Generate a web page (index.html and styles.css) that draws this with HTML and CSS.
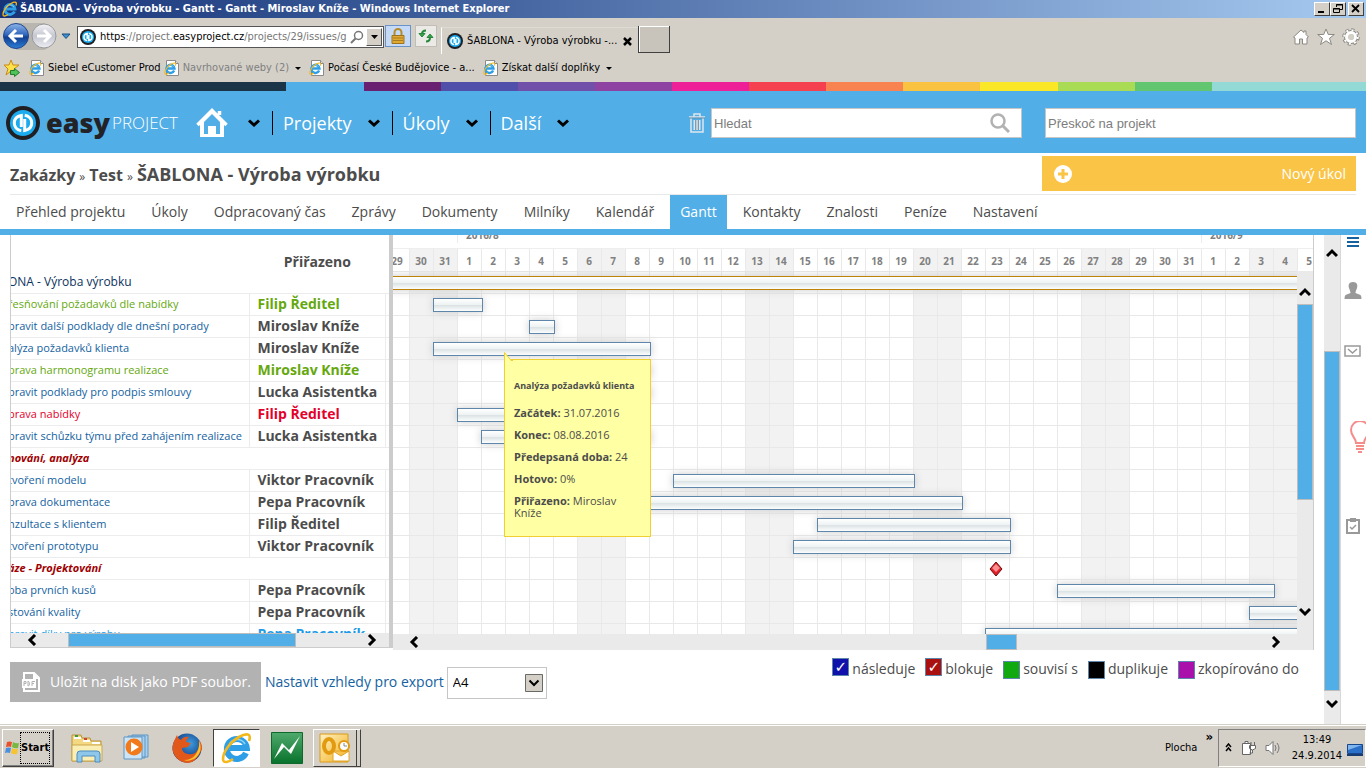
FILE: index.html
```html
<!DOCTYPE html>
<html lang="cs">
<head>
<meta charset="utf-8">
<title>ŠABLONA - Výroba výrobku - Gantt</title>
<link rel="stylesheet" href="styles.css">
</head>
<body>
<svg class="defs" aria-hidden="true">
  <defs>
    <linearGradient id="g-blue" x1="0" y1="0" x2="0" y2="1"><stop offset="0" stop-color="#8fb4e8"/><stop offset=".45" stop-color="#2f66bd"/><stop offset=".55" stop-color="#123f92"/><stop offset="1" stop-color="#2c7fd8"/></linearGradient>
    <linearGradient id="g-grey" x1="0" y1="0" x2="0" y2="1"><stop offset="0" stop-color="#f4f4f8"/><stop offset=".5" stop-color="#c4c6d0"/><stop offset="1" stop-color="#eeeef4"/></linearGradient>
    <linearGradient id="g-green" x1="0" y1="0" x2="0" y2="1"><stop offset="0" stop-color="#4faa6c"/><stop offset="1" stop-color="#08722c"/></linearGradient>
    <linearGradient id="g-gold" x1="0" y1="0" x2="1" y2="1"><stop offset="0" stop-color="#fff2c4"/><stop offset="1" stop-color="#f2b01e"/></linearGradient>
    <radialGradient id="g-fox" cx=".6" cy=".35" r=".6"><stop offset="0" stop-color="#3d9fe0"/><stop offset="1" stop-color="#12317c"/></radialGradient>
    <symbol id="ie" viewBox="0 0 32 32">
      <path fill="none" stroke="#2e9fe6" stroke-width="6" d="M25 21a10 10 0 1 1 .8-5H9"/>
      <path fill="none" stroke="#8ad4f8" stroke-width="1.5" d="M8 13a9 9 0 0 1 16-1"/>
      <path fill="none" stroke="#f5b81c" stroke-width="2.6" d="M28 9c3-8-3-8-10-4C9 10 2 20 2 27c0 5 6 3 10 0"/>
    </symbol>
    <symbol id="page-ie" viewBox="0 0 16 16">
      <path fill="#fff" stroke="#8b8b8b" d="M2.5.5h9l3 3v12h-12z"/><path fill="#ddd" stroke="#8b8b8b" d="M11.5.5v3h3"/>
      <use href="#ie" x="0" y="2" width="13" height="13"/>
    </symbol>
    <symbol id="easy" viewBox="0 0 34 34">
      <circle cx="17" cy="17" r="17" fill="#1f1f24"/><circle cx="17" cy="17" r="13" fill="#1cabee"/>
      <path fill="none" stroke="#fff" stroke-width="3" d="M15.300 21V9.500c-4.500.8-7 3.900-7 7.500s2.500 7 7 7.700M18.700 13v11.500c4.500-.8 7-3.900 7-7.500s-2.500-7-7-7.700"/>
    </symbol>
    <symbol id="down" viewBox="0 0 12 8"><path fill="none" stroke="#000" stroke-width="3" d="M1 1.500l5 4.500 5-4.500"/></symbol>
  </defs>
</svg>

<div class="titlebar">
  <svg class="i16"><use href="#ie"/></svg>
  <span class="titlebar-text">ŠABLONA - Výroba výrobku - Gantt - Gantt - Miroslav Kníže - Windows Internet Explorer</span>
  <button class="winbtn" aria-label="Minimalizovat"><svg viewBox="0 0 10 10"><path d="M1 7h6v2H1z"/></svg></button>
  <button class="winbtn" aria-label="Obnovit"><svg viewBox="0 0 10 10"><path fill="none" stroke="#000" d="M3.500 3V.5h6v5H7M3 1h7M.5 4.500h6v4h-6zM0 5h7"/></svg></button>
  <button class="winbtn winbtn-close" aria-label="Zavřít"><svg viewBox="0 0 10 10"><path stroke="#000" stroke-width="1.800" d="M1 1l7 7M8 1L1 8"/></svg></button>
</div>

<div class="browserbar">
  <svg class="navbtns" viewBox="0 0 56 30"><path fill="#b9b6b0" d="M13 1h28a14 14 0 0 1 0 27H13z"/><circle cx="13" cy="14" r="12.500" fill="url(#g-blue)" stroke="#21468c"/><circle cx="41" cy="14" r="12" fill="url(#g-grey)" stroke="#999"/><path fill="none" stroke="#fff" stroke-width="3" d="M20 14H8M13 8l-6 6 6 6M34 14h12M41 8l6 6-6 6"/></svg>
  <svg class="histbtn" viewBox="0 0 10 7"><path fill="#3f8fd0" stroke="#174f80" d="M1 1h8L5 5.500z"/></svg>
  <div class="address">
    <svg class="i16"><use href="#easy"/></svg>
    <span class="url">https<i>://project.</i>easyproject.cz<i>/projects/29/issues/g</i></span>
    <svg class="i14" viewBox="0 0 14 14"><circle cx="8.500" cy="5.500" r="4" fill="none" stroke="#777" stroke-width="1.500"/><path stroke="#777" stroke-width="2" d="M5.500 8.500L1 13"/></svg>
    <button class="drop" aria-label="Historie"><svg viewBox="0 0 7 4"><path d="M0 0h7L3.500 4z"/></svg></button>
  </div>
  <button class="lock" aria-label="Zabezpečení"><svg viewBox="0 0 14 16"><path fill="none" stroke="#b58b2c" stroke-width="2" d="M3.500 8V4.500a3.500 3.500 0 0 1 7 0V8"/><path fill="#e0a931" stroke="#9d741d" d="M1 7.500h12v8H1z"/><path stroke="#a87c20" d="M2 10h10M2 12.500h10"/></svg></button>
  <button class="refresh" aria-label="Obnovit stránku"><svg viewBox="0 0 16 14"><path fill="none" stroke="#25883a" stroke-width="2" d="M8 1.500Q4 1.500 4 5M8 12.500q4 0 4-4"/><path fill="#3aa04c" stroke="#25883a" d="M1 4.500h6L4 8zM9 8.500h6L12 5z"/></svg></button>
  <div class="tab"><svg class="i16"><use href="#easy"/></svg><span>ŠABLONA - Výroba výrobku -...</span><button class="tab-close" aria-label="Zavřít kartu"><svg viewBox="0 0 9 9"><path stroke="#000" stroke-width="2.500" d="M1 1l7 7M8 1L1 8"/></svg></button></div>
  <button class="newtab" aria-label="Nová karta"></button>
  <div class="tools">
    <svg viewBox="0 0 18 18"><path fill="#fff" stroke="#8b8982" d="M1.500 9L9 2l3 2.500V3h2v3.500L16.500 9 15 10v6h-4.500v-5h-3v5H3v-6z"/></svg>
    <svg viewBox="0 0 18 18"><path fill="#fff" stroke="#8b8982" d="M9 1l2.300 5.500h6l-4.800 3.800 2 6.200L9 12.800l-5.500 3.700 2-6.200L.7 6.500h6z"/></svg>
    <svg viewBox="0 0 18 18"><circle cx="9" cy="9" r="7" fill="none" stroke="#8b8982" stroke-width="3.500" stroke-dasharray="3 2.500"/><circle cx="9" cy="9" r="5" fill="none" stroke="#8b8982" stroke-width="4"/><circle cx="9" cy="9" r="6.800" fill="none" stroke="#fff" stroke-width="2" stroke-dasharray="2 3.400"/><circle cx="9" cy="9" r="4.500" fill="none" stroke="#fff" stroke-width="3"/></svg>
  </div>
</div>
<div class="favorites">
  <svg class="i18" viewBox="0 0 18 18"><path fill="#ffe14a" stroke="#c98a12" d="M8 1l2 5h6l-5 4 2 6-5-4-5 4 2-6-4-4h5z"/><path fill="#4fc25a" stroke="#1f7d2b" d="M7.500 11.500h4v-2l5 4-5 4v-2h-4z"/></svg>
  <a href="#" class="fav"><svg class="i16"><use href="#page-ie"/></svg>Siebel eCustomer Prod</a>
  <a href="#" class="fav fav-muted"><svg class="i16"><use href="#page-ie"/></svg>Navrhované weby (2)<svg class="caret" viewBox="0 0 6 3"><path d="M0 0h6L3 3z"/></svg></a>
  <a href="#" class="fav"><svg class="i16"><use href="#page-ie"/></svg>Počasí České Budějovice - a...</a>
  <a href="#" class="fav"><svg class="i16"><use href="#page-ie"/></svg>Získat další doplňky<svg class="caret" viewBox="0 0 6 3"><path d="M0 0h6L3 3z"/></svg></a>
</div>

<div class="stripes"><i class="s0"></i><i class="s1"></i><i class="s2"></i><i class="s3"></i><i class="s4"></i><i class="s5"></i><i class="s6"></i><i class="s7"></i><i class="s8"></i><i class="s9"></i><i class="s10"></i><i class="s11"></i><i class="s12"></i><i class="s13"></i><i class="s13"></i></div>

<header class="header">
  <a href="#" class="logo"><svg class="logo-mark"><use href="#easy"/></svg><span class="logo-easy">easy</span><span class="logo-project">PROJECT</span></a>
  <a href="#" class="home" aria-label="Domů"><svg viewBox="0 0 32 30"><path fill="none" stroke="#fff" stroke-width="3.500" d="M1.500 17L16 2.500 30.500 17M23.500 7V3"/><path fill="#fff" d="M4 16L16 4l12 12v13H4zM8 14v12h4v-8h8v8h4V14l-8-8z" fill-rule="evenodd"/></svg></a>
  <nav class="mainmenu">
    <button class="mm" aria-label="Domů – nabídka"><svg class="down"><use href="#down"/></svg></button>
    <button class="mm mm-sep">Projekty<svg class="down"><use href="#down"/></svg></button>
    <button class="mm mm-sep">Úkoly<svg class="down"><use href="#down"/></svg></button>
    <button class="mm mm-sep">Další<svg class="down"><use href="#down"/></svg></button>
  </nav>
  <button class="trash" aria-label="Koš"><svg viewBox="0 0 16 20"><path fill="none" stroke="#dfe7ee" stroke-width="1.500" d="M0 4h16M5 3.500V1h6v2.500M2 5v14h12V5"/><path stroke="#dfe7ee" stroke-width="2" d="M5.500 7v10M8 7v10M10.500 7v10"/><path stroke="#6d8ca4" stroke-width="1" d="M0 5h16M6.800 7v10M9.300 7v10"/></svg></button>
  <div class="search"><input type="text" placeholder="Hledat" aria-label="Hledat"><svg viewBox="0 0 20 20"><circle cx="8" cy="8" r="6.500" fill="none" stroke="#b2b2b2" stroke-width="2.500"/><path stroke="#b2b2b2" stroke-width="3" d="M13 13l6 6"/></svg></div>
  <div class="search jump"><input type="text" placeholder="Přeskoč na projekt" aria-label="Přeskoč na projekt"></div>
</header>

<div class="crumbs">
  <h1><a href="#">Zakázky</a><small>»</small><a href="#">Test</a><small>»</small><span>ŠABLONA - Výroba výrobku</span></h1>
  <button class="newtask"><svg viewBox="0 0 18 18"><circle cx="9" cy="9" r="9" fill="#fff"/><path stroke="#fac446" stroke-width="3" d="M9 4v10M4 9h10"/></svg>Nový úkol</button>
</div>
<nav class="tabs">
  <a href="#">Přehled projektu</a><a href="#">Úkoly</a><a href="#">Odpracovaný čas</a><a href="#">Zprávy</a><a href="#">Dokumenty</a><a href="#">Milníky</a><a href="#">Kalendář</a><a href="#" class="active">Gantt</a><a href="#">Kontakty</a><a href="#">Znalosti</a><a href="#">Peníze</a><a href="#">Nastavení</a>
</nav>

<main class="main">
  <section class="content">
    <div class="gantt">
      <div class="list">
        <div class="list-head">Přiřazeno</div>
        <div class="list-body">
          <table>
            <colgroup><col class="col-task"><col class="col-who"><col class="col-end"></colgroup>
            <tr class="proj"><td colspan="3">ONA - Výroba výrobku</td></tr>
            <tr class="green"><td>řesňování požadavků dle nabídky</td><td>Filip Ředitel</td><td></td></tr>
            <tr><td>pravit další podklady dle dnešní porady</td><td>Miroslav Kníže</td><td></td></tr>
            <tr><td>alýza požadavků klienta</td><td>Miroslav Kníže</td><td></td></tr>
            <tr class="green"><td>prava harmonogramu realizace</td><td>Miroslav Kníže</td><td></td></tr>
            <tr><td>pravit podklady pro podpis smlouvy</td><td>Lucka Asistentka</td><td></td></tr>
            <tr class="red"><td>prava nabídky</td><td>Filip Ředitel</td><td></td></tr>
            <tr><td>pravit schůzku týmu před zahájením realizace</td><td>Lucka Asistentka</td><td></td></tr>
            <tr class="phase"><td colspan="3">nování, analýza</td></tr>
            <tr><td>tvoření modelu</td><td>Viktor Pracovník</td><td></td></tr>
            <tr><td>prava dokumentace</td><td>Pepa Pracovník</td><td></td></tr>
            <tr><td>nzultace s klientem</td><td>Filip Ředitel</td><td></td></tr>
            <tr><td>tvoření prototypu</td><td>Viktor Pracovník</td><td></td></tr>
            <tr class="phase"><td colspan="3">áze - Projektování</td></tr>
            <tr><td>oba prvních kusů</td><td>Pepa Pracovník</td><td></td></tr>
            <tr><td>stování kvality</td><td>Pepa Pracovník</td><td></td></tr>
            <tr class="light"><td>pravit díky pro výrobu</td><td>Pepa Pracovník</td><td></td></tr>
          </table>
        </div>
        <div class="hbar list-hbar"><svg viewBox="0 0 10 12"><path d="M8 1L3 6l5 5"/></svg><i></i><svg viewBox="0 0 10 12"><path d="M2 1l5 5-5 5"/></svg></div>
      </div>
      <div class="chart">
        <div class="months"><div class="m0"></div><div class="m1">2016/8</div><div class="m2">2016/9</div></div>
        <div class="days"><div class="track">
          <b>29</b><b>30</b><b>31</b><b>1</b><b>2</b><b>3</b><b>4</b><b>5</b><b>6</b><b>7</b><b>8</b><b>9</b><b>10</b><b>11</b><b>12</b><b>13</b><b>14</b><b>15</b><b>16</b><b>17</b><b>18</b><b>19</b><b>20</b><b>21</b><b>22</b><b>23</b><b>24</b><b>25</b><b>26</b><b>27</b><b>28</b><b>29</b><b>30</b><b>31</b><b>1</b><b>2</b><b>3</b><b>4</b><b>5</b>
        </div></div>
        <div class="plot">
          <div class="rows">
            <div class="track row"><i class="bar bar-proj" style="grid-column:1/40"></i></div>
            <div class="track row"><i class="bar" style="grid-column:3/5"></i></div>
            <div class="track row"><i class="bar" style="grid-column:7/8"></i></div>
            <div class="track row"><i class="bar" style="grid-column:3/12"></i></div>
            <div class="track row"><i class="bar" style="grid-column:8/12"></i></div>
            <div class="track row"><i class="bar" style="grid-column:8/12"></i></div>
            <div class="track row"><i class="bar" style="grid-column:4/10"></i></div>
            <div class="track row"><i class="bar" style="grid-column:5/12"></i></div>
            <div class="track row"></div>
            <div class="track row"><i class="bar" style="grid-column:13/23"></i></div>
            <div class="track row"><i class="bar" style="grid-column:8/25"></i></div>
            <div class="track row"><i class="bar" style="grid-column:19/27"></i></div>
            <div class="track row"><i class="bar" style="grid-column:18/27"></i></div>
            <div class="track row"><svg class="stone" style="grid-column:26" viewBox="0 0 14 16"><path fill="#e0202a" stroke="#6e0c0c" d="M7 1l6 7-6 7-6-7z"/><path fill="#ff8d8d" d="M7 3l4 4-4 4-4-4z"/></svg></div>
            <div class="track row"><i class="bar" style="grid-column:29/38"></i></div>
            <div class="track row"><i class="bar" style="grid-column:37/40"></i></div>
            <div class="track row"><i class="bar" style="grid-column:26/40"></i></div>
          </div>
          <div class="vbar plot-vbar"><svg viewBox="0 0 12 10"><path d="M1 8l5-5 5 5"/></svg><i></i><svg viewBox="0 0 12 10"><path d="M1 2l5 5 5-5"/></svg></div>
          <div class="tip" role="tooltip">
            <svg class="tip-arrow" viewBox="0 0 9 9"><path fill="#ffffa3" d="M0 0v9h9l-2-1z"/><path fill="none" stroke="#f0cf33" d="M.5 9V.5L7 8.500h2"/></svg>
            <h4>Analýza požadavků klienta</h4>
            <p><b>Začátek:</b> 31.07.2016</p>
            <p><b>Konec:</b> 08.08.2016</p>
            <p><b>Předepsaná doba:</b> 24</p>
            <p><b>Hotovo:</b> 0%</p>
            <p><b>Přiřazeno:</b> Miroslav Kníže</p>
          </div>
        </div>
        <div class="hbar chart-hbar"><svg viewBox="0 0 10 12"><path d="M8 1L3 6l5 5"/></svg><i></i><svg viewBox="0 0 10 12"><path d="M2 1l5 5-5 5"/></svg></div>
      </div>
    </div>
    <div class="foot">
      <button class="pdf"><svg viewBox="0 0 18 20"><path fill="none" stroke="#fff" stroke-width="2" d="M2 8V1h10l5 5v13H2v-3"/><path fill="#fff" d="M11 1v6h6zM0 7h14v9H0z"/><path fill="none" stroke="#b2b2b2" d="M2 14V9.500h2v2H2M6 9v5c2 0 2-5 0-4.500M10 14V9.500h3M10 11.500h2"/></svg>Uložit na disk jako PDF soubor.</button>
      <label for="fmt" class="fmt-label">Nastavit vzhledy pro export</label>
      <div class="fmt"><select id="fmt"><option>A4</option><option>A3</option></select><svg viewBox="0 0 18 18"><path fill="#d4d0c8" stroke="#6b6b66" d="M.5.5h17v17H.5z"/><path fill="none" stroke="#000" stroke-width="2" d="M4.500 6.500L9 11l4.500-4.500"/></svg></div>
      <div class="legend">
        <label><input type="checkbox" class="c-blue" checked>následuje</label>
        <label><input type="checkbox" class="c-red" checked>blokuje</label>
        <label class="low"><input type="checkbox" class="c-green">souvisí s</label>
        <label class="low"><input type="checkbox" class="c-black">duplikuje</label>
        <label class="low"><input type="checkbox" class="c-purple">zkopírováno do</label>
      </div>
    </div>
  </section>
  <div class="vbar page-vbar"><svg viewBox="0 0 12 10"><path d="M1 8l5-5 5 5"/></svg><i></i><svg viewBox="0 0 12 10"><path d="M1 2l5 5 5-5"/></svg></div>
  <aside class="side">
    <button aria-label="Nabídka" class="b1"><svg width="12" height="10" viewBox="0 0 12 10"><path stroke="#14629f" stroke-width="2" d="M0 1h12M0 5h12M0 9h12"/></svg></button>
    <button aria-label="Uživatel" class="b2"><svg width="18" height="17" viewBox="0 0 18 17"><path fill="#999" d="M9 0c4 0 5 3 4 6-.5 2-1.500 3-1.500 5l5 2q1 1 1 4H.5q0-3 1-4l5-2C6.500 9 5.500 8 5 6 4 3 5 0 9 0z"/></svg></button>
    <button aria-label="Zprávy" class="b3"><svg width="17" height="12" viewBox="0 0 17 12"><path fill="none" stroke="#999" stroke-width="1.500" d="M1 1h15v10H1zM4 4l4.500 4L13 4"/></svg></button>
    <button aria-label="Nápověda" class="b4"><svg width="20" height="32" viewBox="0 0 20 32"><path fill="none" stroke="#f58c8c" stroke-width="2" d="M6 22c0-5-5-7-5-13a9 9 0 0 1 18 0c0 6-5 8-5 13zM6 25h8M6 28h8M8 31h4"/></svg></button>
    <button aria-label="Úkoly" class="b5"><svg width="14" height="16" viewBox="0 0 14 16"><path fill="none" stroke="#999" stroke-width="2" d="M1 2h12v13H1z"/><path fill="#999" d="M4 0h6v4H4z"/><path fill="none" stroke="#999" stroke-width="1.500" d="M4 9l2 2 4-4"/></svg></button>
  </aside>
</main>

<footer class="taskbar">
  <button class="start"><svg viewBox="0 0 16 16"><path fill="#e8502c" d="M3 2q3-1 5 0L7 7Q5 6 2 7z"/><path fill="#77b843" d="M9 2q3 2 6 1l-1 5q-3 1-6-1z"/><path fill="#4a8fe0" d="M2 8q3-1 5 0l-1 5q-3-1-5 0z"/><path fill="#f7c32e" d="M8 8q3 2 6 1l-1 5q-3 1-6-1z"/></svg><span>Start</span></button>
  <button class="app app-files" aria-label="Průzkumník"><svg viewBox="0 0 32 30"><path fill="#f5d982" stroke="#b99237" d="M1 28V2h9l1 3h8l1 3h10v20z"/><path fill="#fff" d="M3 4h7v2H3zM12 7h7v2h-7zM21 9h8v2h-8z"/><path fill="#fbeeb4" stroke="#c9a64f" d="M1 12h30v16H1z"/><path fill="#8fc7ea" stroke="#4b8cc0" d="M6 29v-8q0-3 3-3h17q3 0 3 3v8h-5v-6H11v6z"/><path stroke="#3b9b3d" stroke-width="2" d="M4 3h3"/><path stroke="#d04433" stroke-width="2" d="M13 6h3"/></svg></button>
  <button class="app app-media" aria-label="Přehrávač"><svg viewBox="0 0 30 28"><path fill="#a9cfec" stroke="#5e97c4" d="M9 1h16v22H9zM5 2h17v22H5z"/><path fill="#cde4f6" stroke="#5e97c4" d="M1 3h18v22H1z"/><circle cx="11" cy="13" r="8.500" fill="#f07a1c"/><path fill="#fff" d="M8 8l8 5-8 5z"/></svg></button>
  <button class="app app-fox" aria-label="Firefox"><svg viewBox="0 0 30 30"><circle cx="15" cy="15" r="14.500" fill="url(#g-fox)"/><path fill="#e2581a" d="M3 6q-5 10 0 17t13 7 14-14q0-6-3-9 1 7-2 11t-9 3-6-6l6-1 3-4-5-1q0-3 3-5-5-1-8 3-3-1-4-5z"/><path fill="#fbc22c" d="M27 7q5 12-5 19-6 3-10 1 8 0 12-6t3-14z"/></svg></button>
  <button class="app app-ie" aria-label="Internet Explorer"><svg viewBox="0 0 32 32"><use href="#ie"/></svg></button>
  <button class="app app-bolt" aria-label="Power"><svg viewBox="0 0 32 32"><path fill="url(#g-green)" stroke="#0d6a2c" d="M.5.5h31v31H.5z"/><path fill="#fff" d="M3 27L11 11l7 7L29 4 20 22l-7-7z"/></svg></button>
  <button class="app app-outlook" aria-label="Outlook"><svg viewBox="0 0 32 30"><path fill="url(#g-gold)" stroke="#dc9a17" d="M1 1h28v28H1z"/><path fill="#fff" stroke="#e2a42a" d="M14 18h16v10H14zM14 18l8 5 8-5"/><ellipse cx="10" cy="13" rx="5" ry="7" fill="none" stroke="#e29a10" stroke-width="4"/><circle cx="25" cy="13" r="5" fill="#fff" stroke="#e29a10" stroke-width="2"/><path fill="none" stroke="#888" d="M25 10v3h3"/></svg></button>
  <span class="desk">Plocha</span><span class="more">»</span>
  <div class="tray">
    <svg class="t-up" viewBox="0 0 7 9"><path fill="none" stroke="#000" stroke-width="1.500" d="M1 4l2.500-3L6 4M1 8l2.500-3L6 8"/></svg>
    <svg class="t-ico" viewBox="0 0 16 16"><path fill="#fff" stroke="#666" d="M1.500 3.500h8v11h-8zM4 1.500h3v2H4zM8.500 5.500h6v3q-3 3-6 0zM10 2v3.500M13.500 2v3.500M11.500 10v3h-3"/></svg>
    <svg class="t-ico" viewBox="0 0 16 16"><path fill="#fff" stroke="#777" d="M1 5.500h3l4-4v13l-4-4H1z"/><path fill="none" stroke="#777" d="M10 5q2 3 0 6M12 3q4 5 0 10"/></svg>
    <time>13:49<br>24.9.2014</time>
    <svg class="t-desk" viewBox="0 0 16 12"><path fill="#2b70c8" stroke="#17488e" d="M.5.500h15v9H.5z"/><path fill="#7fb6ee" d="M1 1h14L1 6z"/><path fill="#173c72" d="M0 10h16v2H0z"/></svg>
  </div>
</footer>
</body>
</html>
```

FILE: styles.css
```css
* { box-sizing: border-box; }
body {
  margin: 0; min-height: 100vh; display: flex; flex-direction: column; overflow: hidden;
  background: #fff; color: #4c4c4c; font: 14px/20px "Open Sans", "Noto Sans", sans-serif;
}
button, input, select { font: inherit; color: inherit; }
button { border: 0; padding: 0; background: none; }
a { color: inherit; text-decoration: none; }
svg { flex: none; display: block; }
.defs { position: absolute; width: 0; height: 0; }
.i14 { width: 14px; height: 14px; }
.i16 { width: 16px; height: 16px; }
.i18 { width: 18px; height: 18px; }

/* browser chrome */
.titlebar, .browserbar, .favorites, .taskbar { font: 11px/14px "DejaVu Sans Condensed", "Noto Sans", sans-serif; color: #000; }
.titlebar {
  height: 18px; display: flex; align-items: center; padding: 0 2px;
  background: linear-gradient(90deg, #173478, #3a5a98 30%, #7394c6 66%, #a6caf0); color: #fff; font-weight: bold;
}
.titlebar-text { flex: 1; margin-left: 2px; white-space: nowrap; }
.winbtn { width: 16px; height: 14px; background: #d4d0c8; border: 1px solid; border-color: #fff #404040 #404040 #fff; display: grid; place-items: center; }
.winbtn svg { width: 10px; height: 10px; }
.winbtn-close { margin-left: 2px; }
.browserbar { height: 36px; background: #d4d0c8; display: flex; align-items: flex-start; padding: 4px 6px 0 3px; }
.navbtns { width: 56px; height: 30px; }
.histbtn { width: 10px; height: 7px; margin: 11px 6px 0 2px; }
.address { margin-top: 4px; width: 307px; height: 22px; background: #fff; border: 1px solid #555; display: flex; align-items: center; padding-left: 2px; }
.url { flex: 1; margin-left: 4px; white-space: nowrap; overflow: hidden; }
.url i { font-style: normal; color: #777; }
.drop { width: 16px; height: 18px; margin: 0 1px 0 2px; background: #d4d0c8; border: 1px solid; border-color: #fff #555 #555 #fff; display: grid; place-items: center; }
.drop svg { width: 7px; height: 4px; }
.lock, .refresh { margin-top: 3px; height: 22px; display: grid; place-items: center; border: 1px solid #6a93c8; background: #c4daf6; }
.lock { width: 26px; margin-left: 1px; }
.lock svg { width: 14px; height: 16px; }
.refresh { width: 22px; margin-left: 4px; border-color: #c2beb6; background: #eceae6; }
.refresh svg { width: 16px; height: 14px; }
.tab { margin: 5px 0 0 4px; width: 198px; height: 27px; border-left: 1px solid #fff; border-top: 1px solid #dedbd5; display: flex; align-items: center; padding-left: 5px; white-space: nowrap; }
.tab span { flex: 1; margin-left: 4px; overflow: hidden; }
.tab-close { margin-right: 7px; }
.tab-close svg { width: 9px; height: 9px; }
.newtab { margin-top: 4px; width: 31px; height: 27px; background: #c8c4bc; border: solid #404040; border-width: 0 1px 1px 0; box-shadow: inset 1px 1px #fff, -1px 0 #404040; }
.tools { margin: 6px 0 0 auto; display: flex; gap: 7px; }
.tools svg { width: 18px; height: 18px; }
.favorites { height: 28px; background: #d4d0c8; display: flex; align-items: center; padding-left: 3px; gap: 8px; white-space: nowrap; }
.fav { display: flex; align-items: center; gap: 3px; }
.fav-muted { margin-left: -5px; color: #808080; }
.caret { width: 6px; height: 3px; margin-left: 3px; }

.stripes { height: 9px; display: flex; }
.stripes i { flex: 77; }
.stripes .s0 { flex: 286; background: #1b3548; }
.s1 { background: #51aee6; } .s2 { background: #6a2071; } .s3 { background: #5050aa; } .s4 { background: #7050a8; }
.s5 { background: #8e42a2; } .s6 { background: #ed2098; } .s7 { background: #f5404f; } .s8 { background: #f88350; }
.s9 { background: #fac241; } .s10 { background: #fae728; } .s11 { background: #aadb55; } .s12 { background: #62c671; } .s13 { background: #93dad6; }

/* application header */
.header { height: 62px; background: #51aee6; display: flex; align-items: center; padding: 2px 10px 0 6px; }
.logo { display: flex; align-items: center; width: 190px; }
.logo-mark { width: 34px; height: 34px; }
.logo-easy { margin-left: 6px; font: 800 27px/34px "Open Sans", sans-serif; color: #222227; }
.logo-project { margin-left: 2px; font: 300 17px/34px "Open Sans", sans-serif; color: #fff; }
.home svg { width: 32px; height: 30px; }
.mainmenu { display: flex; align-items: center; margin-left: 20px; }
.mm { display: flex; align-items: center; gap: 16px; height: 24px; color: #fff; font-size: 18px; }
.mm-sep { border-left: 1px solid #000; margin-left: 12px; padding-left: 10px; }
.down { width: 12px; height: 8px; }
.trash { margin-left: auto; }
.trash svg { width: 16px; height: 20px; }
.search { width: 311px; margin-left: 6px; height: 30px; background: #fff; border: 1px solid #c6c6c6; display: flex; align-items: center; }
.search input { flex: 1; min-width: 0; height: 28px; border: 0; background: none; padding: 0 2px; font: 13px/18px "Liberation Sans", Arial, sans-serif; }
.search input::placeholder { color: #7d7d7d; }
.search svg { width: 20px; height: 20px; margin-right: 11px; }
.jump { margin-left: 23px; }

.crumbs { margin: 3px 10px 0; height: 39px; display: flex; justify-content: space-between; align-items: flex-start; border-bottom: 1px solid #e8e8e8; }
h1 { margin: 4px 0 0; font-size: 16px; line-height: 28px; font-weight: bold; }
h1 small { font-size: 12px; font-weight: normal; margin: 0 4px; }
h1 span { font-size: 18px; }
.newtask { width: 314px; height: 35px; padding: 0 10px 0 12px; background: #fac446; color: #fff; display: flex; align-items: center; justify-content: space-between; }
.newtask svg { width: 18px; height: 18px; }
.tabs { height: 40px; display: flex; gap: 6px; padding: 0 6px; border-bottom: 6px solid #51aee6; }
.tabs a { padding: 0 10px; line-height: 34px; }
.tabs .active { background: #51aee6; color: #fff; }

/* main area */
.main { flex: 1; display: flex; min-height: 0; }
.content { flex: 1; min-width: 0; padding-left: 10px; }
.gantt { display: flex; margin-right: 10px; align-items: flex-start; }
.list { width: 383px; flex: none; border: solid #ccc; border-width: 0 4px 1px 1px; }
.list-head { height: 36px; line-height: 54px; text-align: right; padding-right: 38px; font-weight: bold; }
.list-body { height: 362px; overflow: hidden; }
table { width: 381px; margin-left: -3px; border-collapse: collapse; table-layout: fixed; }
.col-task { width: 241px; }
.col-who { width: 136px; }
.col-end { width: 4px; }
td { height: 22px; padding: 0; font-size: 11px; line-height: 20px; color: #14629f; border-bottom: 1px solid #ececec; white-space: nowrap; }
td + td { padding: 0 0 2px 8px; font-size: 14px; line-height: 19px; font-weight: bold; color: #4c4c4c; border-left: 1px solid #ececec; }
td + td + td { padding: 0; }
.proj td { font-size: 12px; color: #0c3360; }
.green td { color: #65a80e; }
.red td { color: #e4002b; }
.light td { color: #1e9be8; }
.phase td { color: #a00000; font-weight: bold; font-style: italic; }
.hbar, .vbar { background: #eaeaea; display: flex; align-items: center; }
.hbar i, .vbar i { background: #51aee6; border: 1px solid #bdbdbd; }
.hbar svg, .vbar svg { fill: none; stroke: #000; stroke-width: 3; }
.hbar svg { width: 10px; height: 12px; }
.vbar svg { width: 12px; height: 10px; }
.vbar { flex-direction: column; }
.list-hbar { height: 14px; padding: 0 12px 0 16px; }
.list-hbar i { width: 228px; height: 14px; margin: 0 auto 0 31px; }

.chart { flex: 1; min-width: 0; color: #808080; border-right: 1px solid #ccc; }
.months { height: 14px; overflow: hidden; display: flex; font-size: 10px; font-weight: bold; border-bottom: 1px solid #eee; }
.months div { height: 8px; border-left: 1px solid #ececec; padding-left: 8px; line-height: 0; }
.months .m0 { width: 64px; border: 0; }
.months .m1 { width: 744px; }
.days { height: 22px; overflow: hidden; }
.track {
  display: grid; grid-template-columns: repeat(39, 24px); margin-left: -8px; width: 936px;
  background:
    repeating-linear-gradient(90deg, #e9e9e9 0 1px, transparent 1px 24px),
    repeating-linear-gradient(90deg, #fff 0 24px, #f2f2f2 24px 72px, #fff 72px 168px);
}
.days .track { font-size: 10px; line-height: 24px; text-align: center; }
.plot { display: flex; height: 363px; position: relative; }
.rows { flex: 1; min-width: 0; overflow: hidden; }
.row { height: 22px; align-items: center; border-top: 1px solid #e8e8e8; }
.bar { display: block; height: 14px; margin: 0 -2px 0 0; border: 1px solid #5e86ab; background: linear-gradient(#fff, #edf2f2 50%, #dbe3e4 52%, #fcfdfd); box-shadow: 0 0 8px #ccc; }
.bar-proj { border-color: #bd8209; }
.stone { width: 14px; height: 16px; margin-left: 4px; }
.plot-vbar { width: 16px; padding: 16px 0 17px; justify-content: flex-start; }
.plot-vbar i { width: 16px; height: 196px; margin: 7px 0 auto; }
.chart-hbar { height: 16px; padding: 0 32px 0 16px; }
.chart-hbar i { width: 31px; height: 16px; margin: 0 0 0 auto; }
.chart-hbar svg:last-child { margin-left: 254px; }
.tip { position: absolute; left: 111px; top: 88px; width: 147px; padding: 20px 9px 15px; background: #ffffa3; border: 1px solid #f0cf33; color: #4c4c4c; font-size: 11px; line-height: 12px; }
.tip-arrow { position: absolute; left: -1px; top: -8px; width: 9px; height: 9px; }
.tip h4 { margin: 0 0 15px; font-size: 9px; line-height: 12px; white-space: nowrap; }
.tip p { margin: 0 0 10px; }
.tip p:last-child { margin: 0 0 2px; }

.foot { display: flex; align-items: flex-start; padding: 12px 25px 0 0; }
.pdf { height: 40px; padding: 0 10px 0 12px; background: #b2b2b2; color: #fff; display: flex; align-items: center; gap: 10px; white-space: nowrap; }
.pdf svg { width: 18px; height: 20px; }
.fmt-label { margin: 10px 3px 0 4px; color: #14629f; white-space: nowrap; }
.fmt { position: relative; margin-top: 5px; width: 100px; height: 32px; border: 1px solid #c6c6c6; }
.fmt select { appearance: none; width: 100%; height: 28px; border: 0; background: none; padding: 0 5px; color: #000; font-size: 13px; }
.fmt svg { position: absolute; right: 3px; top: 6px; width: 18px; height: 18px; pointer-events: none; }
.legend { margin-left: auto; display: flex; gap: 10px; white-space: nowrap; margin-top: -4px; }
.legend label { display: flex; align-items: flex-start; gap: 3px; line-height: 21px; }
.legend input { appearance: none; margin: 0; width: 17px; height: 18px; border: 1px solid #5e86ab; display: grid; place-items: center; }
.legend input:checked::after { content: "✓"; color: #fff; font: bold 15px/16px "DejaVu Sans", sans-serif; }
.legend .low input { margin-top: 3px; }
.c-blue { background: #1010aa; } .c-red { background: #aa1010; } .c-green { background: #10aa10; } .c-black { background: #000; } .c-purple { background: #aa10aa; }

.page-vbar { width: 17px; padding: 13px 0 15px; border-right: 1px solid #d8d8d8; }
.page-vbar i { width: 16px; height: 340px; margin: auto 0 8px; }
.side { width: 25px; overflow: hidden; display: flex; flex-direction: column; align-items: flex-start; padding: 2px 0 0 3px; }
.b1 { margin-left: 3px; }
.b2 { margin-top: 35px; }
.b3 { margin-top: 46px; }
.b4 { margin: 64px 0 0 6px; }
.b5 { margin: 65px 0 0 2px; }

/* taskbar */
.taskbar { height: 44px; border-top: 1px solid #d4d0c8; box-shadow: inset 0 1px #fff; background: #d4d0c8; display: flex; align-items: center; padding: 2px 0 0 2px; }
.start { width: 52px; height: 38px; border: 1px solid; border-color: #fff #404040 #404040 #fff; box-shadow: inset -1px -1px #808080; display: flex; align-items: center; font-weight: bold; padding-left: 1px; }
.start svg { width: 16px; height: 16px; }
.start span { border: 1px dotted #000; width: 30px; height: 32px; line-height: 30px; }
.app { display: grid; place-items: center; height: 38px; }
.app-files { margin-left: 17px; } .app-files svg { width: 32px; height: 30px; }
.app-media { margin-left: 20px; } .app-media svg { width: 30px; height: 28px; }
.app-fox { margin-left: 19px; } .app-fox svg { width: 30px; height: 30px; }
.app-ie { margin-left: 11px; width: 47px; border: 1px solid; border-color: #404040 #fff #fff #404040; background: #fff; } .app-ie svg { width: 32px; height: 32px; }
.app-bolt { margin-left: 11px; } .app-bolt svg { width: 32px; height: 32px; }
.app-outlook { margin-left: 10px; width: 48px; padding-right: 5px; border: 1px solid; border-color: #fff #404040 #404040 #fff; box-shadow: inset -3px 0 #d4d0c8, inset -4px 0 #404040; } .app-outlook svg { width: 32px; height: 30px; }
.desk { margin-left: auto; }
.more { margin: 0 5px 22px 8px; font-weight: bold; font-size: 13px; }
.tray { width: 148px; height: 38px; border: 1px solid; border-color: #808080 #fff #fff #808080; display: flex; align-items: center; padding-left: 6px; }
.t-up { width: 7px; height: 9px; margin-right: 9px; }
.t-ico { width: 16px; height: 16px; margin-right: 8px; }
time { flex: 1; text-align: center; line-height: 16px; }
.t-desk { width: 16px; height: 12px; margin: 4px 2px 0; }
```
